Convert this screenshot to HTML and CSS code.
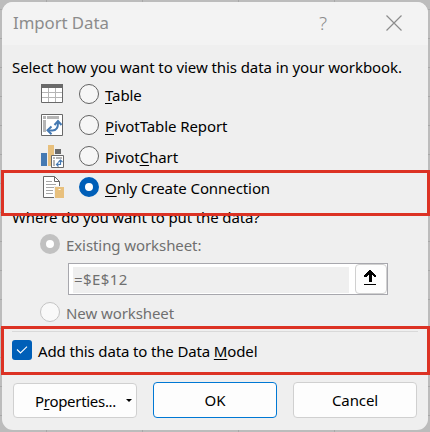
FILE: index.html
```html
<!DOCTYPE html>
<html lang="en">
<head>
<meta charset="utf-8">
<title>Import Data</title>
<link rel="stylesheet" href="styles.css">
</head>
<body>
<main class="dialog">
  <header class="titlebar">
    <h1 class="title">Import Data</h1>
    <span class="help">?</span>
    <svg class="close" width="16" height="16" viewBox="0 0 16 16"><path d="M.5.5l15 15M15.500.5l-15 15" fill="none" stroke="#8c8c8c" stroke-width="1.200"/></svg>
  </header>
  <section class="content">
    <p class="prompt">Select how you want to view this data in your workbook.</p>
    <div class="row">
      <svg class="icon" width="24" height="24" viewBox="0 0 24 24"><path fill="#fff" d="M1 3h22v18H1z"/><path fill="#696969" d="M1 2h22v4H1z"/><path d="M8.500 6v15M15.500 6v15M2 10.500h20M2 15.500h20" stroke="#b5b5b5" fill="none"/><path d="M1.500 3v17.500h21V3" stroke="#696969" fill="none"/></svg>
      <span class="radio"></span><span class="label"><u>T</u>able</span>
    </div>
    <div class="row">
      <svg class="icon" width="24" height="24" viewBox="0 0 24 24"><path fill="#fff" stroke="#696969" d="M1.500 1.500h21v21h-21z"/><path fill="#b5b5b5" d="M3 3h3v3H3zM7 3h12v3H7zM3 7h3v12H3z"/><path d="M9 17.500h3.500c4 0 5.500-3 5.500-7.500V9" stroke="#4579b2" stroke-width="2" fill="none"/><path d="M14.500 12l3.500-4 3.500 4M11.500 13.500L7.500 17.300l4 4" stroke="#4579b2" stroke-width="2" fill="none"/></svg>
      <span class="radio"></span><span class="label"><u>P</u>ivotTable Report</span>
    </div>
    <div class="row">
      <svg class="icon" width="24" height="24" viewBox="0 0 24 24"><path fill="#4579b2" d="M1 9h6v13H1z"/><path fill="#e8c07d" d="M8 1h6v21H8z"/><path fill="#696969" d="M15 5h6v5h-6z"/><path fill="#fff" stroke="#696969" d="M11.500 11.500h12v12h-12z"/><path fill="#b5b5b5" d="M13 13h2v2h-2zM16 13h6v2h-6zM13 16h2v6h-2z"/><path d="M17 20.500h3.500v-4M18.500 18.500l-2 2 2 2M18.500 18l2-2 2 2" stroke="#4579b2" stroke-width="1.200" fill="none"/></svg>
      <span class="radio"></span><span class="label">Pivot<u>C</u>hart</span>
    </div>
    <div class="row">
      <svg class="icon" width="24" height="24" viewBox="0 0 24 24"><path fill="#fff" stroke="#696969" d="M3.500 1.500h11l5 5v16h-16z"/><path d="M14.500 1.500v5h5" fill="none" stroke="#696969"/><path d="M6 6.500h6M6 9.500h10M6 12.500h8M6 15.500h7M6 18.500h7" stroke="#a6a6a6" fill="none"/><path fill="#e8c07d" stroke="#f0f0f0" d="M14.500 11.500h10v12h-10z"/><path d="M18.500 14.500h2" stroke="#fff"/></svg>
      <span class="radio checked"></span><span class="label"><u>O</u>nly Create Connection</span>
    </div>
    <p class="prompt where">Where do you want to put the data?</p>
    <div class="row sub">
      <span class="radio off-checked"></span><span class="label">Existing worksheet:</span>
    </div>
    <div class="refedit">
      <span class="value">=$E$12</span>
      <span class="pick"><svg width="12" height="15" viewBox="0 0 12 15"><path d="M5 0h2v1h1v1h1v1h1v1h1v1h1v2h-2V6H9V5H8v7H5V5H4v1H3v1H0V5h1V4h1V3h1V2h1V1h1zM0 14h12v1H0z" fill="#000"/></svg></span>
    </div>
    <div class="row sub">
      <span class="radio off"></span><span class="label">New worksheet</span>
    </div>
    <div class="separator"></div>
    <div class="row model">
      <span class="check"><svg width="12" height="8" viewBox="0 0 12 8"><path d="M1 3.500L4.500 7 11 .7" fill="none" stroke="#fff" stroke-width="1.100"/></svg></span>
      <span class="label">Add this data to the Data <u>M</u>odel</span>
    </div>
    <footer class="buttons">
      <span class="button props"><span class="props-text">P<u>r</u>operties...</span><span class="caret"></span></span>
      <span class="button ok">OK</span>
      <span class="button">Cancel</span>
    </footer>
  </section>
</main>
<div class="highlight first"></div>
<div class="highlight second"></div>
</body>
</html>
```
FILE: styles.css
```css
* { box-sizing: border-box; }
body {
  margin: 0; width: 430px; height: 432px; padding: 2px; overflow: hidden; position: relative;
  font: 15px/20px "Noto Sans", sans-serif; letter-spacing: -.08px; color: #000;
  background:
    repeating-linear-gradient(90deg, transparent 0 46px, #a8a8a8 46px 47px, transparent 47px 96px),
    repeating-linear-gradient(180deg, transparent 0 9px, #a8a8a8 9px 10px, transparent 10px 29px),
    #bcbcbc;
}
.dialog { width: 426px; height: 428px; border-radius: 11px; overflow: hidden; background: #efefef; }
.titlebar { height: 43px; background: #f3f3f3; display: flex; align-items: center; padding: 0 26px 0 11px; color: #8c8c8c; }
.title { margin: 0; font-size: 16.8px; font-weight: 400; flex: 1; letter-spacing: -.05px; position: relative; top: -1px; }
.help { font-size: 19px; margin-right: 59px; font-weight: 300; position: relative; top: -1px; }
.close { position: relative; top: -1px; }
.content { padding: 12px 10px 0; }
p { margin: 0; white-space: nowrap; }
.prompt { height: 22px; line-height: 20px; }
.row { height: 30px; margin-bottom: 1px; display: flex; align-items: center; padding-left: 28px; }
.icon { margin-right: 15px; flex: none; }
.radio { width: 20px; height: 20px; border: 1px solid #626262; border-radius: 50%; background: #f6f6f6; flex: none; margin-right: 6px; }
.radio.checked { border: 6px solid #005fb8; background: #fff; }
.radio.off-checked { border: 6px solid #c1c1c1; background: #fff; }
.radio.off { border-color: #c4c4c4; background: #f9f9f9; }
.label { white-space: nowrap; position: relative; top: 1px; }
u { text-underline-offset: 2px; text-decoration-thickness: 1px; }
.where { margin: 4px 0 1px; line-height: 22px; letter-spacing: -.13px; }
.sub { color: #707070; margin-bottom: 0; }
.refedit { width: 320px; height: 32px; margin: 4px 0 2px 56px; border: 1px solid #a7a7ad; background: #fff; display: flex; padding-left: 4px; }
.value { width: 276px; height: 26px; margin-top: 3px; background: #efefef; color: #707070; line-height: 25px; padding-left: 1px; letter-spacing: .4px; }
.pick { width: 32px; height: 30px; margin-left: 6px; border: 1px solid #d0d0d0; border-radius: 4px; background: #fdfdfd; display: flex; align-items: center; justify-content: center; padding-right: 2px; padding-bottom: 3px; }
.separator { height: 1px; margin: 4px 0 3px; background: #d9d9d9; }
.model { padding: 0; margin: 0; letter-spacing: -.14px; }
.check { width: 20px; height: 20px; border-radius: 3px; background: #005fb8; display: flex; align-items: center; justify-content: center; margin-right: 6px; }
.buttons { display: flex; gap: 16px; margin-top: 17px; padding-left: 1px; }
.button { width: 124px; height: 36px; flex: none; background: #fdfdfd; border: 1px solid #d0d0d0; border-radius: 4px; display: flex; align-items: center; justify-content: center; }
.ok { border-color: #0078d4; }
.props { height: 35px; margin-top: 1px; justify-content: space-between; padding: 0 4px 0 21px; }
.props-text { letter-spacing: -.3px; }
.caret { border: 3px solid transparent; border-top-color: #000; border-bottom: 0; }
.highlight { position: absolute; left: 1px; width: 429px; border: 3px solid #dc3224; }
.first { top: 170px; height: 46px; }
.second { top: 326px; height: 49px; }
```
